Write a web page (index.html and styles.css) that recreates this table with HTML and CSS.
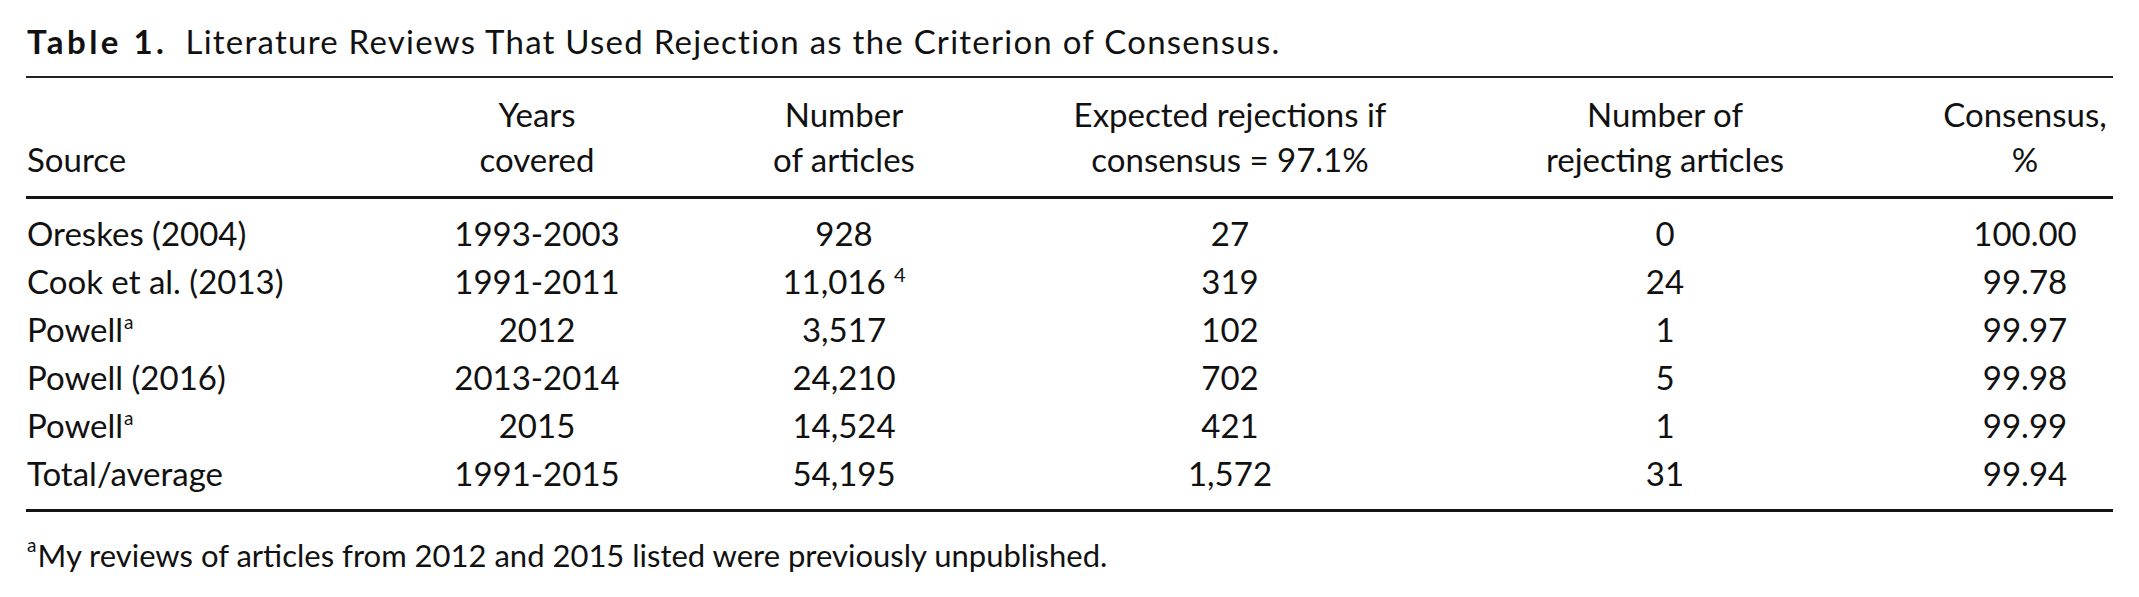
FILE: index.html
```html
<!DOCTYPE html>
<html lang="en">
<head>
<meta charset="utf-8">
<title>Table 1</title>
<link rel="stylesheet" href="styles.css">
</head>
<body>
<div class="page">
  <p class="caption"><b>Table 1.</b>Literature Reviews That Used Rejection as the Criterion of Consensus.</p>
  <div class="table">
    <div class="head">
      <div class="cell left"><span>&nbsp;</span><span>Source</span></div>
      <div class="cell"><span>Years</span><span>covered</span></div>
      <div class="cell"><span>Number</span><span>of articles</span></div>
      <div class="cell"><span>Expected rejections if</span><span>consensus = 97.1%</span></div>
      <div class="cell"><span>Number of</span><span>rejecting articles</span></div>
      <div class="cell"><span>Consensus,</span><span>%</span></div>
    </div>
    <div class="body">
      <div class="cell left">Oreskes (2004)</div>
      <div class="cell">1993-2003</div>
      <div class="cell">928</div>
      <div class="cell">27</div>
      <div class="cell">0</div>
      <div class="cell">100.00</div>

      <div class="cell left">Cook et al. (2013)</div>
      <div class="cell">1991-2011</div>
      <div class="cell"><span>11,016 <sup class="ref">4</sup></span></div>
      <div class="cell">319</div>
      <div class="cell">24</div>
      <div class="cell">99.78</div>

      <div class="cell left"><span>Powell<sup class="note">a</sup></span></div>
      <div class="cell">2012</div>
      <div class="cell">3,517</div>
      <div class="cell">102</div>
      <div class="cell">1</div>
      <div class="cell">99.97</div>

      <div class="cell left">Powell (2016)</div>
      <div class="cell">2013-2014</div>
      <div class="cell">24,210</div>
      <div class="cell">702</div>
      <div class="cell">5</div>
      <div class="cell">99.98</div>

      <div class="cell left"><span>Powell<sup class="note">a</sup></span></div>
      <div class="cell">2015</div>
      <div class="cell">14,524</div>
      <div class="cell">421</div>
      <div class="cell">1</div>
      <div class="cell">99.99</div>

      <div class="cell left">Total/average</div>
      <div class="cell">1991-2015</div>
      <div class="cell">54,195</div>
      <div class="cell">1,572</div>
      <div class="cell">31</div>
      <div class="cell">99.94</div>
    </div>
  </div>
  <p class="footnote"><sup class="fn">a</sup>My reviews of articles from 2012 and 2015 listed were previously unpublished.</p>
</div>
</body>
</html>
```

FILE: styles.css
```css
html, body {
  margin: 0;
  padding: 0;
  background: #ffffff;
}

body {
  font-family: "Lato", "Open Sans", "DejaVu Sans", sans-serif;
  color: #111111;
}

.page {
  padding: 23px 26px 0 26px;
  width: 2087px;
}

.caption {
  margin: 0 0 17px 1px;
  font-size: 33px;
  line-height: 36px;
  letter-spacing: 1.25px;
  white-space: nowrap;
}

.caption b {
  display: inline-block;
  font-weight: 700;
  letter-spacing: 3.5px;
  margin-right: 18px;
}

.table {
  border-top: 2px solid #222222;
  border-bottom: 3px solid #151515;
}

.head,
.body {
  display: grid;
  grid-template-columns: 427px 168px 446px 326px 544px 176px;
  font-size: 33px;
}

.head {
  padding: 14px 0;
  line-height: 45px;
  border-bottom: 3px solid #151515;
}

.body {
  padding: 10px 0 12px 0;
  line-height: 48px;
}

.cell {
  display: flex;
  flex-direction: column;
  align-items: center;
  justify-content: center;
  white-space: nowrap;
}

.body .cell {
  flex-direction: row;
}

.cell.left {
  align-items: flex-start;
  justify-content: flex-start;
  padding-left: 1px;
}

.body .cell.left {
  align-items: center;
}

.note {
  font-size: 19px;
  line-height: 0;
  vertical-align: baseline;
  position: relative;
  top: -13px;
  margin-left: 1px;
}

.ref {
  font-size: 20px;
  line-height: 0;
  vertical-align: baseline;
  position: relative;
  top: -12px;
}

.footnote {
  margin: 23px 0 0 1px;
  font-size: 31px;
  line-height: 40px;
  white-space: nowrap;
}

.fn {
  font-size: 19px;
  line-height: 0;
  vertical-align: baseline;
  position: relative;
  top: -15px;
  margin-right: 1px;
}
```
